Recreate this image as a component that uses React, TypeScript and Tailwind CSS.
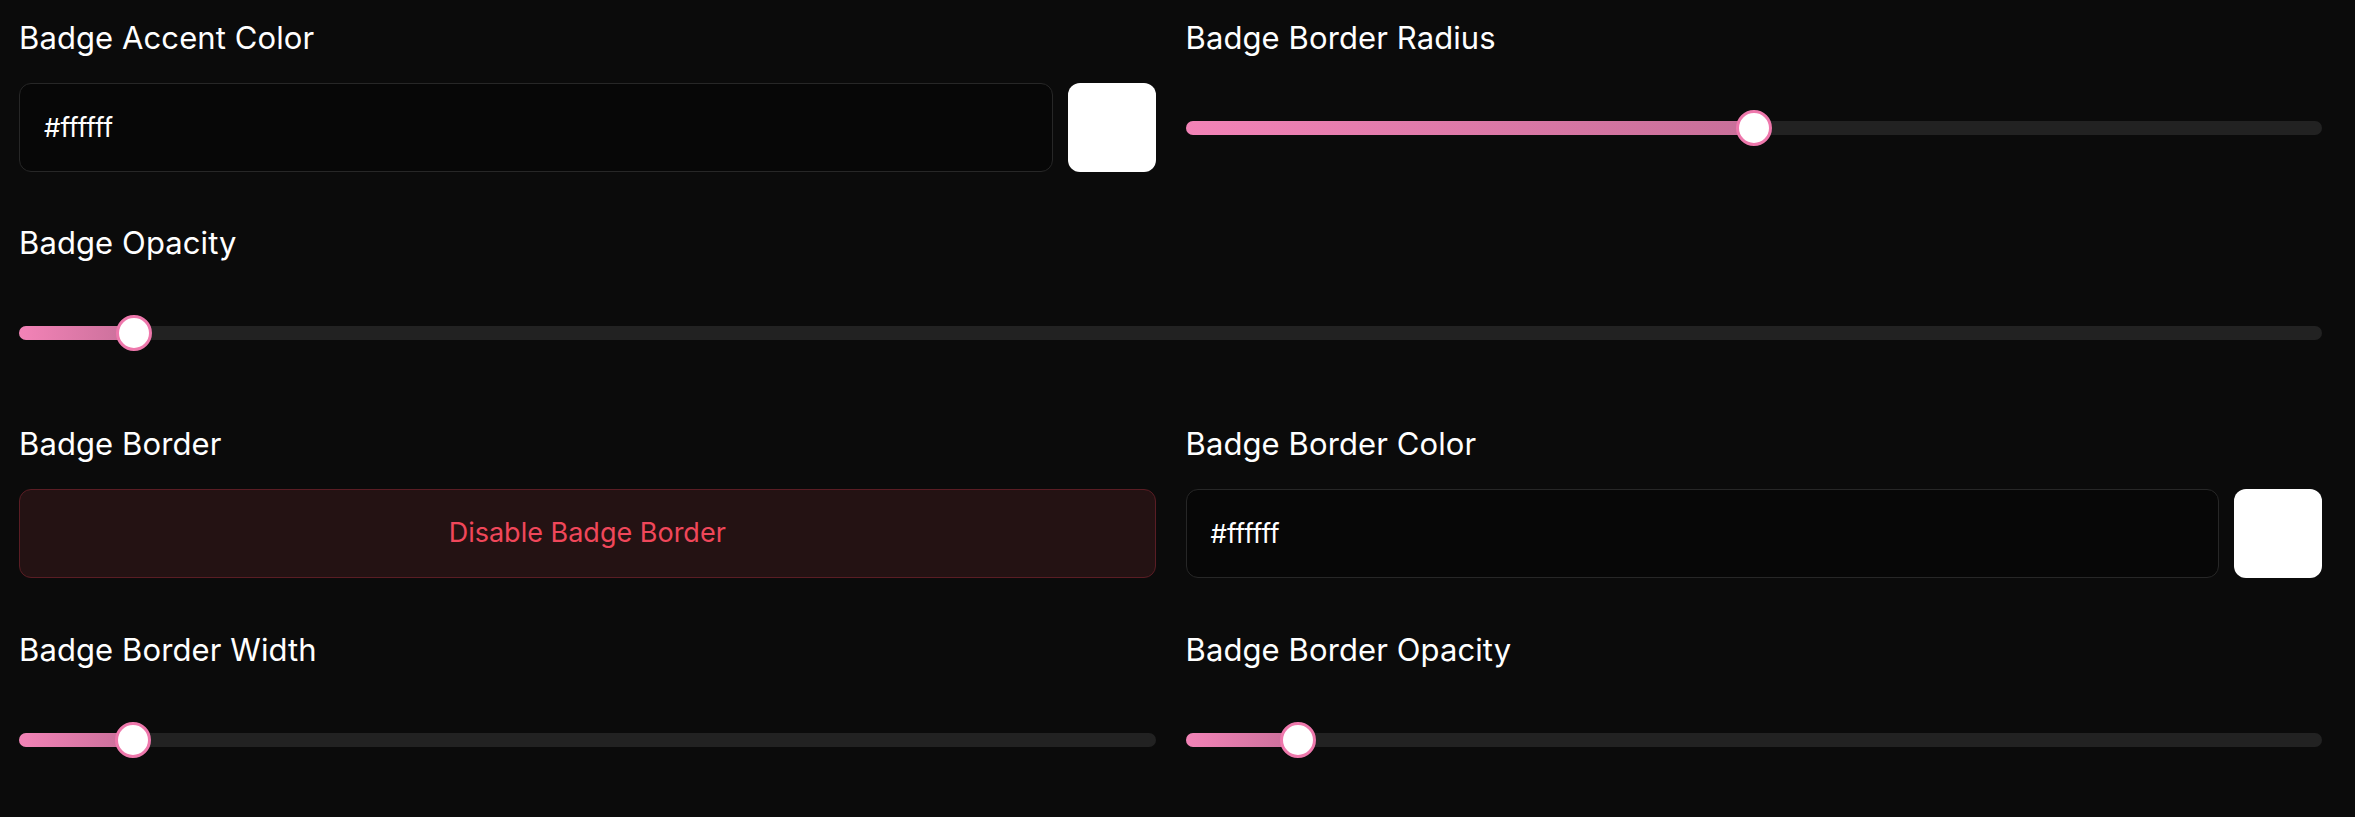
const font = { fontFamily: "Inter, 'Liberation Sans', sans-serif" };

function Label({ children }: { children: string }) {
  return (
    <p className="text-[31px] leading-[36px] font-normal text-white tracking-[0.1px] translate-y-[1px]">
      {children}
    </p>
  );
}

function Slider({ value }: { value: number }) {
  return (
    <div className="h-[89px] flex items-center">
      <div className="relative w-full h-[14px] rounded-full bg-[#222222]">
        <div
          className="absolute left-0 top-0 h-full rounded-full bg-gradient-to-r from-[#f383b7] to-[#c86f99]"
          style={{ width: `${value}%` }}
        />
        <div
          className="absolute top-1/2 -translate-x-1/2 -translate-y-1/2 size-[36px] rounded-full bg-white border-[3px] border-[#ee78ac]"
          style={{ left: `${value}%` }}
        />
      </div>
    </div>
  );
}

function ColorInput({ value }: { value: string }) {
  return (
    <div className="flex gap-[15px] h-[89px]">
      <div className="flex-1 flex items-center rounded-[12px] border border-[#272727] bg-[#070707] px-[24px]">
        <span className="text-[26px] text-white">{value}</span>
      </div>
      <div className="w-[88px] rounded-[12px] bg-white" />
    </div>
  );
}

function Field({ label, children }: { label: string; children: React.ReactNode }) {
  return (
    <div className="flex flex-col gap-[28px]">
      <Label>{label}</Label>
      {children}
    </div>
  );
}

export default function App() {
  return (
    <div className="min-h-[817px] bg-[#0b0b0b] pt-[19px] pl-[19px] pr-[33px]" style={font}>
      <div className="grid grid-cols-2 gap-x-[30px]">
        <Field label="Badge Accent Color">
          <ColorInput value="#ffffff" />
        </Field>
        <Field label="Badge Border Radius">
          <Slider value={50} />
        </Field>
      </div>

      <div className="mt-[52px]">
        <Field label="Badge Opacity">
          <Slider value={5} />
        </Field>
      </div>

      <div className="grid grid-cols-2 gap-x-[30px] mt-[48px]">
        <Field label="Badge Border">
          <button className="h-[89px] w-full rounded-[12px] border border-[#5a1d24] bg-[#241213] text-[27px] text-[#f0475a]">
            Disable Badge Border
          </button>
        </Field>
        <Field label="Badge Border Color">
          <ColorInput value="#ffffff" />
        </Field>
      </div>

      <div className="grid grid-cols-2 gap-x-[30px] mt-[53px]">
        <Field label="Badge Border Width">
          <Slider value={10} />
        </Field>
        <Field label="Badge Border Opacity">
          <Slider value={9.9} />
        </Field>
      </div>
    </div>
  );
}
